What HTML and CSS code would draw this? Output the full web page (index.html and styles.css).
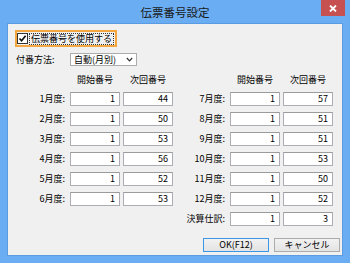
FILE: index.html
```html
<!DOCTYPE html>
<html lang="ja">
<head>
<meta charset="utf-8">
<title>伝票番号設定</title>
<link rel="stylesheet" href="styles.css">
</head>
<body>
<div class="window">
  <div class="titlebar">
    <span></span>
    <span class="title">伝票番号設定</span>
    <div class="close-wrap">
      <span class="close"><svg width="8" height="7" viewBox="0 0 8 7"><path d="M1 0.5 L7 6.5 M7 0.5 L1 6.5" stroke="#fff" stroke-width="1.8"/></svg></span>
    </div>
  </div>
  <div class="client">
    <div class="use-box">
      <span class="cb"><svg width="9" height="9" viewBox="0 0 9 9"><path d="M1.5 4.5 L3.6 6.8 L7.6 1.8" fill="none" stroke="#111" stroke-width="1.7"/></svg></span>
      <span class="use-text">伝票番号を使用する</span>
    </div>
    <div class="method">
      <span class="method-label">付番方法:</span>
      <span class="select"><span>自動(月別)</span><svg width="7" height="5" viewBox="0 0 7 5"><path d="M0.8 1 L3.5 3.8 L6.2 1" fill="none" stroke="#333" stroke-width="1.2"/></svg></span>
    </div>
    <div class="grid">
      <span></span><span class="hdr">開始番号</span><span class="hdr">次回番号</span>
      <span></span><span class="hdr">開始番号</span><span class="hdr">次回番号</span>

      <span class="lbl">1月度:</span><span class="inp">1</span><span class="inp">44</span>
      <span class="lbl">7月度:</span><span class="inp">1</span><span class="inp">57</span>

      <span class="lbl">2月度:</span><span class="inp">1</span><span class="inp">50</span>
      <span class="lbl">8月度:</span><span class="inp">1</span><span class="inp">51</span>

      <span class="lbl">3月度:</span><span class="inp">1</span><span class="inp">53</span>
      <span class="lbl">9月度:</span><span class="inp">1</span><span class="inp">51</span>

      <span class="lbl">4月度:</span><span class="inp">1</span><span class="inp">56</span>
      <span class="lbl">10月度:</span><span class="inp">1</span><span class="inp">53</span>

      <span class="lbl">5月度:</span><span class="inp">1</span><span class="inp">52</span>
      <span class="lbl">11月度:</span><span class="inp">1</span><span class="inp">50</span>

      <span class="lbl">6月度:</span><span class="inp">1</span><span class="inp">53</span>
      <span class="lbl">12月度:</span><span class="inp">1</span><span class="inp">52</span>

      <span></span><span></span><span></span>
      <span class="lbl">決算仕訳:</span><span class="inp">1</span><span class="inp">3</span>
    </div>
    <div class="buttons">
      <span class="btn default">OK(F12)</span>
      <span class="btn">キャンセル</span>
    </div>
  </div>
</div>
</body>
</html>
```

FILE: styles.css
```css
* { box-sizing: border-box; }
html, body { margin: 0; padding: 0; }
body {
  width: 350px;
  height: 263px;
  overflow: hidden;
  font-family: "Noto Sans CJK JP", "Noto Sans", sans-serif;
  font-size: 9px;
  color: #000;
}
.window {
  width: 350px;
  height: 263px;
  background: #6badf3;
  display: flex;
  flex-direction: column;
}
.titlebar {
  height: 23px;
  display: grid;
  grid-template-columns: 1fr auto 1fr;
  align-items: start;
}
.title {
  font-size: 11.5px;
  line-height: 23px;
  padding-top: 1px;
  color: #1a1a1a;
}
.close-wrap {
  display: flex;
  justify-content: flex-end;
  padding-right: 5px;
}
.close {
  width: 24px;
  height: 16px;
  background: #c75050;
  display: flex;
  align-items: center;
  justify-content: center;
}
.client {
  margin: 0 7px;
  height: 233px;
  background: #f0f0f0;
  border: 1px solid #5b9be2;
  display: flex;
  flex-direction: column;
  align-items: flex-start;
  padding-top: 6px;
}
.use-box {
  margin-left: 7px;
  width: 102px;
  height: 17px;
  border: 2px solid #f4a73e;
  display: flex;
  align-items: center;
}
.cb {
  width: 11px;
  height: 11px;
  border: 1px solid #333;
  background: #fff;
  display: flex;
  align-items: center;
  justify-content: center;
}
.use-text {
  margin-left: 1px;
  height: 12px;
  line-height: 10px;
  padding: 0 1px;
  border: 1px dotted #333;
  white-space: nowrap;
}
.method {
  margin-top: 6px;
  margin-left: 8px;
  display: flex;
  align-items: center;
}
.method-label {
  width: 54px;
  line-height: 13px;
}
.select {
  width: 67px;
  height: 13px;
  background: #fff;
  border: 1px solid #acacac;
  display: flex;
  align-items: center;
  justify-content: space-between;
  padding: 0 3px 0 3px;
  line-height: 11px;
}
.grid {
  margin-top: 8px;
  display: grid;
  grid-template-columns: 59px 50px 50px 51px 50px 50px;
  grid-template-rows: 12px repeat(7, 14px);
  column-gap: 3px;
  row-gap: 6px;
}
.hdr {
  text-align: center;
  line-height: 12px;
  white-space: nowrap;
}
.lbl {
  text-align: right;
  padding-right: 2px;
  line-height: 14px;
  white-space: nowrap;
}
.inp {
  background: #fff;
  border: 1px solid #abadb3;
  border-top-color: #9c9c9c;
  text-align: right;
  padding-right: 4px;
  line-height: 12px;
}
.buttons {
  margin-top: 12px;
  align-self: stretch;
  display: flex;
  justify-content: flex-end;
  gap: 5px;
  padding-right: 2px;
}
.btn {
  width: 66px;
  height: 14px;
  border: 1px solid #acacac;
  background: linear-gradient(#f2f2f2, #e3e3e3);
  text-align: center;
  line-height: 12px;
}
.btn.default {
  border-color: #3c96e8;
}
```
